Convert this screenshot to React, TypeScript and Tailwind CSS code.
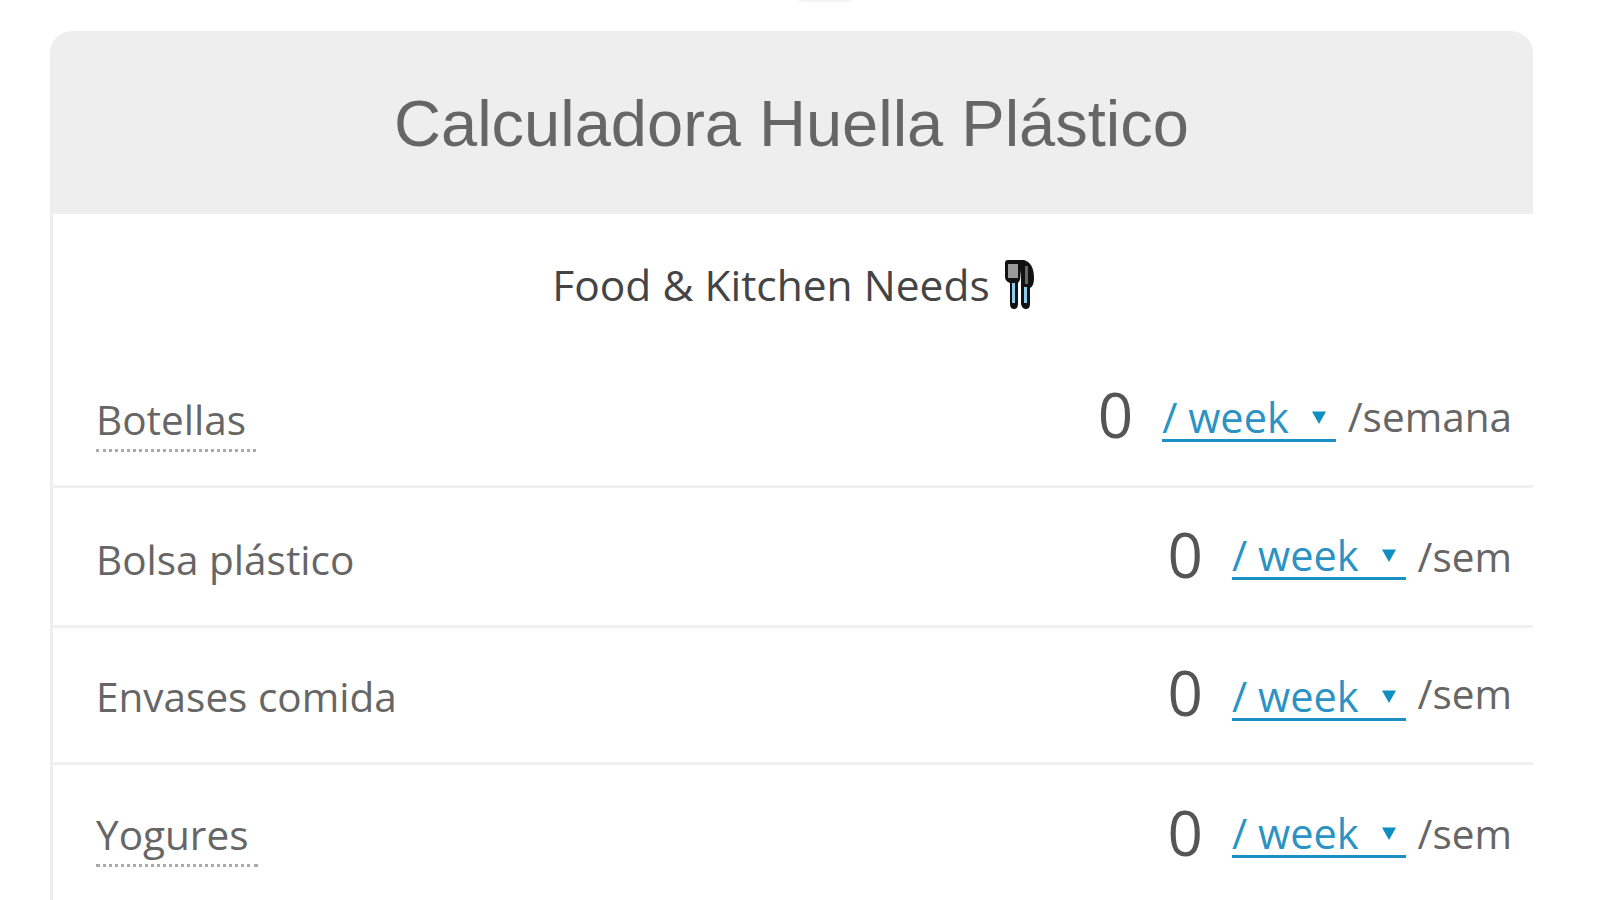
const rows = [
  { label: "Botellas", unit: "/semana", dotted: true, height: "h-[137px]", labelPad: "pt-[5px]", unitPad: "pb-[2px]", weekPad: "pt-[0px]", zeroPad: "pb-[8px]" },
  { label: "Bolsa plástico", unit: "/sem", dotted: false, height: "h-[140px]", labelPad: "pt-[6px]", unitPad: "pt-[0px]", weekPad: "pt-[0px]", zeroPad: "pb-[6px]" },
  { label: "Envases comida", unit: "/sem", dotted: false, height: "h-[137px]", labelPad: "pt-[3px]", unitPad: "pb-[2px]", weekPad: "pt-[5px]", zeroPad: "pb-[6px]" },
  { label: "Yogures", unit: "/sem", dotted: true, height: "h-[140px]", labelPad: "pt-[1px]", unitPad: "pb-[2px]", weekPad: "pb-[2px]", zeroPad: "pb-[6px]" },
];

type RowProps = {
  label: string;
  unit: string;
  dotted: boolean;
  height: string;
  labelPad: string;
  unitPad: string;
  weekPad: string;
  zeroPad: string;
};

function Row({ label, unit, dotted, height, labelPad, unitPad, weekPad, zeroPad }: RowProps) {
  return (
    <div className={`flex items-center justify-between border-b-[3px] border-[#f0f0f0] pl-[43px] pr-[21px] last:border-b-0 ${height}`}>
      <div className={labelPad}>
        <span className={`block text-[40.5px] leading-[59px] text-[#666] ${dotted ? "border-b-[3px] border-dotted border-[#aaa] pr-[10px]" : ""}`}>
          {label}
        </span>
      </div>
      <div className="flex items-center">
        <span className={`text-[62px] leading-none text-[#555] ${zeroPad}`}>0</span>
        <div className={weekPad}>
          <span className="ml-[29px] flex items-center border-b-[3px] border-[#1a90c4] text-[41.5px] leading-[44px] text-[#2a93c4]">
            / week
            <svg viewBox="0 0 10 10" className="ml-[23px] mr-[10px] h-[14px] w-[14px] fill-[#0e8fc4]">
              <path d="M0 1h10L5 10z" />
            </svg>
          </span>
        </div>
        <span className={`ml-[12px] text-[40.5px] leading-[50px] text-[#666] ${unitPad}`}>{unit}</span>
      </div>
    </div>
  );
}

function ForkKnife() {
  return (
    <svg viewBox="0 0 30 50" className="h-[50px] w-[30px]">
      {/* fork */}
      <path d="M1 3q0-3 3-3h12v20l-2 3v21q0 5-4 5t-4-5V23q-5-2-5-6z" fill="#111" />
      <rect x="4" y="4" width="10" height="14" fill="#9a9a9a" />
      <rect x="8" y="23" width="3" height="20" fill="#8ecdf0" />
      {/* knife */}
      <path d="M15 0h5q10 3 10 18 0 8-4 10v16q0 5-4 5t-5-5V20z" fill="#111" />
      <rect x="21" y="6" width="3" height="18" fill="#666" />
      <rect x="20" y="27" width="3" height="16" fill="#8ecdf0" />
    </svg>
  );
}

export default function App() {
  return (
    <div className="relative h-[900px] overflow-hidden bg-white pl-[50px] pr-[67px] pt-[31px] font-['Open_Sans',sans-serif]">
      <div className="absolute left-[795px] top-[-14px] h-[16px] w-[60px] rounded-full bg-[#f3f3f3]" />
      <div className="h-[183px] rounded-t-[22px] bg-[#eee] text-center font-['Liberation_Sans',sans-serif] text-[65px] leading-[185px] text-[#666]">
        Calculadora Huella Plástico
      </div>
      <div className="border-l-[3px] border-[#eee]">
        <div className="flex h-[137px] items-center justify-center gap-[14px] pt-[4px] text-[42.5px] text-[#444]">
          Food &amp; Kitchen Needs
          <ForkKnife />
        </div>
        {rows.map((r) => (
          <Row key={r.label} {...r} />
        ))}
      </div>
    </div>
  );
}
